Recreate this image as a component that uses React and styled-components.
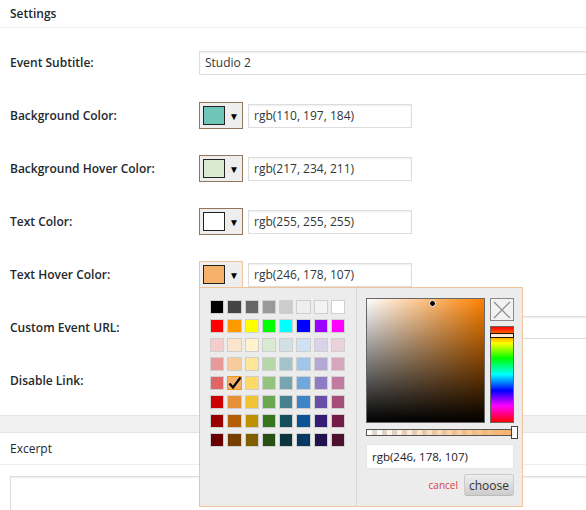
import React from 'react';
import styled, { createGlobalStyle } from 'styled-components';

const GlobalStyle = createGlobalStyle`
  html, body {
    margin: 0;
    padding: 0;
    background: #fff;
  }
  body {
    font-family: "Open Sans", "Liberation Sans", sans-serif;
    color: #23282d;
    overflow: hidden;
  }
  * { box-sizing: border-box; }
`;

const Page = styled.div`
  width: 586px;
  height: 510px;
  overflow: hidden;
  background: #fff;
`;

const BoxHeader = styled.div`
  height: 28px;
  padding-left: 10px;
  display: flex;
  align-items: center;
  font-size: 12px;
  font-weight: ${p => (p.$bold ? 600 : 400)};
  border-bottom: 1px solid #eee;
`;

const Form = styled.div`
  padding: 8px 0 8px 10px;
`;

const Row = styled.div`
  height: 53px;
  display: flex;
  align-items: center;
`;

const Label = styled.div`
  width: 189px;
  flex: none;
  font-size: 12px;
  font-weight: 600;
`;

const TextInput = styled.div`
  height: ${p => p.$h || 24}px;
  width: ${p => (p.$wide ? 'auto' : '164px')};
  flex: ${p => (p.$wide ? 1 : 'none')};
  margin-right: ${p => (p.$wide ? '-20px' : 0)};
  border: 1px solid #ddd;
  box-shadow: inset 0 1px 2px rgba(0, 0, 0, 0.07);
  background: #fff;
  font-size: 12px;
  color: #32373c;
  padding: 0 5px;
  display: flex;
  align-items: center;
`;

const Picker = styled.div`
  position: relative;
  display: flex;
  align-items: center;
  gap: 5px;
`;

const Replacer = styled.div`
  width: 44px;
  height: 27px;
  padding: 3px;
  border: 1px solid ${p => (p.$active ? '#f0c49b' : '#91765d')};
  background: #eee;
  display: flex;
  align-items: center;
`;

const Preview = styled.div`
  width: 24px;
  height: 19px;
  border: 1px solid #222;
  background: ${p => p.$color};
`;

const Arrow = styled.span`
  margin-left: 4px;
  font-size: 10px;
  line-height: 1;
  color: #000;
`;

const Checkbox = styled.div`
  width: 16px;
  height: 16px;
  border: 1px solid #b4b9be;
  background: #fff;
`;

const Band = styled.div`
  height: 18px;
  background: #f1f1f1;
  border-top: 1px solid #e5e5e5;
  border-bottom: 1px solid #e5e5e5;
`;

const HeaderTall = styled(BoxHeader)`
  height: 32px;
`;

const TextArea = styled.div`
  margin: 11px 0 0 10px;
  width: 600px;
  height: 60px;
  border: 1px solid #ddd;
  box-shadow: inset 0 1px 2px rgba(0, 0, 0, 0.07);
`;

/* ---- colour picker popup ---- */

const Popup = styled.div`
  position: absolute;
  left: 0;
  top: calc(100% - 1px);
  z-index: 10;
  width: 324px;
  display: flex;
  background: #ececec;
  border: 1px solid #f0c49b;
`;

const PalettePane = styled.div`
  width: 157px;
  padding: 12px 0 0 10px;
  border-right: 1px solid #d6d6d6;
`;

const Grid = styled.div`
  display: grid;
  grid-template-columns: repeat(8, 14.3px);
  grid-auto-rows: 14.3px;
  column-gap: 3px;
  row-gap: 4.7px;
`;

const Cell = styled.div`
  position: relative;
  background: ${p => p.$color};
  border: 1px solid ${p => (p.$active ? '#f39c12' : '#cfcfcf')};
`;

const CheckIcon = styled.svg`
  position: absolute;
  left: -1px;
  top: -2px;
  width: 16px;
  height: 16px;
`;

const PickerPane = styled.div`
  flex: 1;
  padding: 10px 8px 10px 9px;
  display: flex;
  flex-direction: column;
`;

const Top = styled.div`
  display: flex;
  gap: 5px;
`;

const SatBox = styled.div`
  position: relative;
  width: 119px;
  height: 125px;
  border: 1px solid #666;
  background:
    linear-gradient(to top, #000, rgba(0, 0, 0, 0)),
    linear-gradient(to right, #fff, rgba(255, 255, 255, 0)),
    rgb(255, 130, 0);
`;

const Dragger = styled.div`
  position: absolute;
  left: 62px;
  top: 1px;
  width: 7px;
  height: 7px;
  border-radius: 50%;
  border: 1px solid #fff;
  background: #000;
`;

const SideCol = styled.div`
  width: 24px;
  display: flex;
  flex-direction: column;
  gap: 5px;
`;

const ClearBtn = styled.div`
  height: 23px;
  border: 1px solid #8a8a8a;
  background: #f2f2f2;
  display: flex;
  align-items: center;
  justify-content: center;
`;

const Hue = styled.div`
  position: relative;
  height: 97px;
  border: 1px solid #666;
  background: linear-gradient(
    to bottom,
    #f00 0%, #ff0 17%, #0f0 33%, #0ff 50%, #00f 67%, #f0f 83%, #f00 100%
  );
`;

const HueHandle = styled.div`
  position: absolute;
  left: -1px;
  right: -1px;
  top: 6px;
  height: 5px;
  background: #fff;
  border: 1px solid #000;
  opacity: 0.85;
`;

const Alpha = styled.div`
  position: relative;
  margin-top: 6px;
  height: 7px;
  border: 1px solid #555;
  background:
    linear-gradient(to right, rgba(246, 178, 107, 0), rgb(246, 178, 107)),
    repeating-conic-gradient(#d8d8d8 0 25%, #fff 0 50%) 0 0 / 10px 10px;
`;

const AlphaHandle = styled.div`
  position: absolute;
  right: -5px;
  top: -4px;
  width: 7px;
  height: 13px;
  background: #fff;
  border: 1px solid #333;
  opacity: 0.9;
`;

const PickerInput = styled.div`
  margin-top: 8px;
  height: 25px;
  background: #fff;
  border: 1px solid #e6e6e6;
  border-radius: 2px;
  font-size: 11.5px;
  color: #222;
  padding-left: 5px;
  display: flex;
  align-items: center;
`;

const Buttons = styled.div`
  margin-top: 5px;
  display: flex;
  justify-content: flex-end;
  align-items: center;
  gap: 6px;
`;

const Cancel = styled.span`
  font-size: 10px;
  color: #d93f3f;
`;

const Choose = styled.div`
  width: 50px;
  height: 22px;
  border: 1px solid #ccc;
  border-bottom-color: #bbb;
  border-radius: 3px;
  background: linear-gradient(to bottom, #eee, #ccc);
  font-size: 12px;
  color: #333;
  display: flex;
  align-items: center;
  justify-content: center;
`;

const palette = [
  ['#000000', '#444444', '#666666', '#999999', '#cccccc', '#eeeeee', '#f3f3f3', '#ffffff'],
  ['#ff0000', '#ff9900', '#ffff00', '#00ff00', '#00ffff', '#0000ff', '#9900ff', '#ff00ff'],
  ['#f4cccc', '#fce5cd', '#fff2cc', '#d9ead3', '#d0e0e3', '#cfe2f3', '#d9d2e9', '#ead1dc'],
  ['#ea9999', '#f9cb9c', '#ffe599', '#b6d7a8', '#a2c4c9', '#9fc5e8', '#b4a7d6', '#d5a6bd'],
  ['#e06666', '#f6b26b', '#ffd966', '#93c47d', '#76a5af', '#6fa8dc', '#8e7cc3', '#c27ba0'],
  ['#cc0000', '#e69138', '#f1c232', '#6aa84f', '#45818e', '#3d85c6', '#674ea7', '#a64d79'],
  ['#990000', '#b45f06', '#bf9000', '#38761d', '#134f5c', '#0b5394', '#351c75', '#741b47'],
  ['#660000', '#783f04', '#7f6000', '#274e13', '#0c343d', '#073763', '#20124d', '#4c1130'],
];

const ColorPopup = () => (
  <Popup>
    <PalettePane>
      <Grid>
        {palette.flat().map((c, i) => (
          <Cell key={i} $color={c} $active={c === '#f6b26b'}>
            {c === '#f6b26b' && (
              <CheckIcon viewBox="0 0 16 16">
                <path d="M2.5 8.5 L6 12.5 L13.5 2.5" fill="none" stroke="#000" strokeWidth="2.2" />
              </CheckIcon>
            )}
          </Cell>
        ))}
      </Grid>
    </PalettePane>
    <PickerPane>
      <Top>
        <SatBox>
          <Dragger />
        </SatBox>
        <SideCol>
          <ClearBtn>
            <svg width="18" height="18" viewBox="0 0 18 18">
              <path d="M1 1 L17 17 M17 1 L1 17" stroke="#8c8c8c" strokeWidth="1.2" />
            </svg>
          </ClearBtn>
          <Hue>
            <HueHandle />
          </Hue>
        </SideCol>
      </Top>
      <Alpha>
        <AlphaHandle />
      </Alpha>
      <PickerInput>rgb(246, 178, 107)</PickerInput>
      <Buttons>
        <Cancel>cancel</Cancel>
        <Choose>choose</Choose>
      </Buttons>
    </PickerPane>
  </Popup>
);

const ColorField = ({ color, value, open }) => (
  <Picker>
    <Replacer $active={open}>
      <Preview $color={color} />
      <Arrow>▼</Arrow>
    </Replacer>
    <TextInput>{value}</TextInput>
    {open && <ColorPopup />}
  </Picker>
);

const colorRows = [
  { label: 'Background Color:', color: 'rgb(110, 197, 184)' },
  { label: 'Background Hover Color:', color: 'rgb(217, 234, 211)' },
  { label: 'Text Color:', color: 'rgb(255, 255, 255)' },
  { label: 'Text Hover Color:', color: 'rgb(246, 178, 107)', open: true },
];

export default function App() {
  return (
    <Page>
      <GlobalStyle />
      <BoxHeader $bold>Settings</BoxHeader>
      <Form>
        <Row>
          <Label>Event Subtitle:</Label>
          <TextInput $wide>Studio 2</TextInput>
        </Row>
        {colorRows.map(r => (
          <Row key={r.label}>
            <Label>{r.label}</Label>
            <ColorField color={r.color} value={r.color} open={r.open} />
          </Row>
        ))}
        <Row>
          <Label>Custom Event URL:</Label>
          <TextInput $wide $h={23} />
        </Row>
        <Row>
          <Label>Disable Link:</Label>
          <Checkbox />
        </Row>
      </Form>
      <Band />
      <HeaderTall>Excerpt</HeaderTall>
      <TextArea />
    </Page>
  );
}
